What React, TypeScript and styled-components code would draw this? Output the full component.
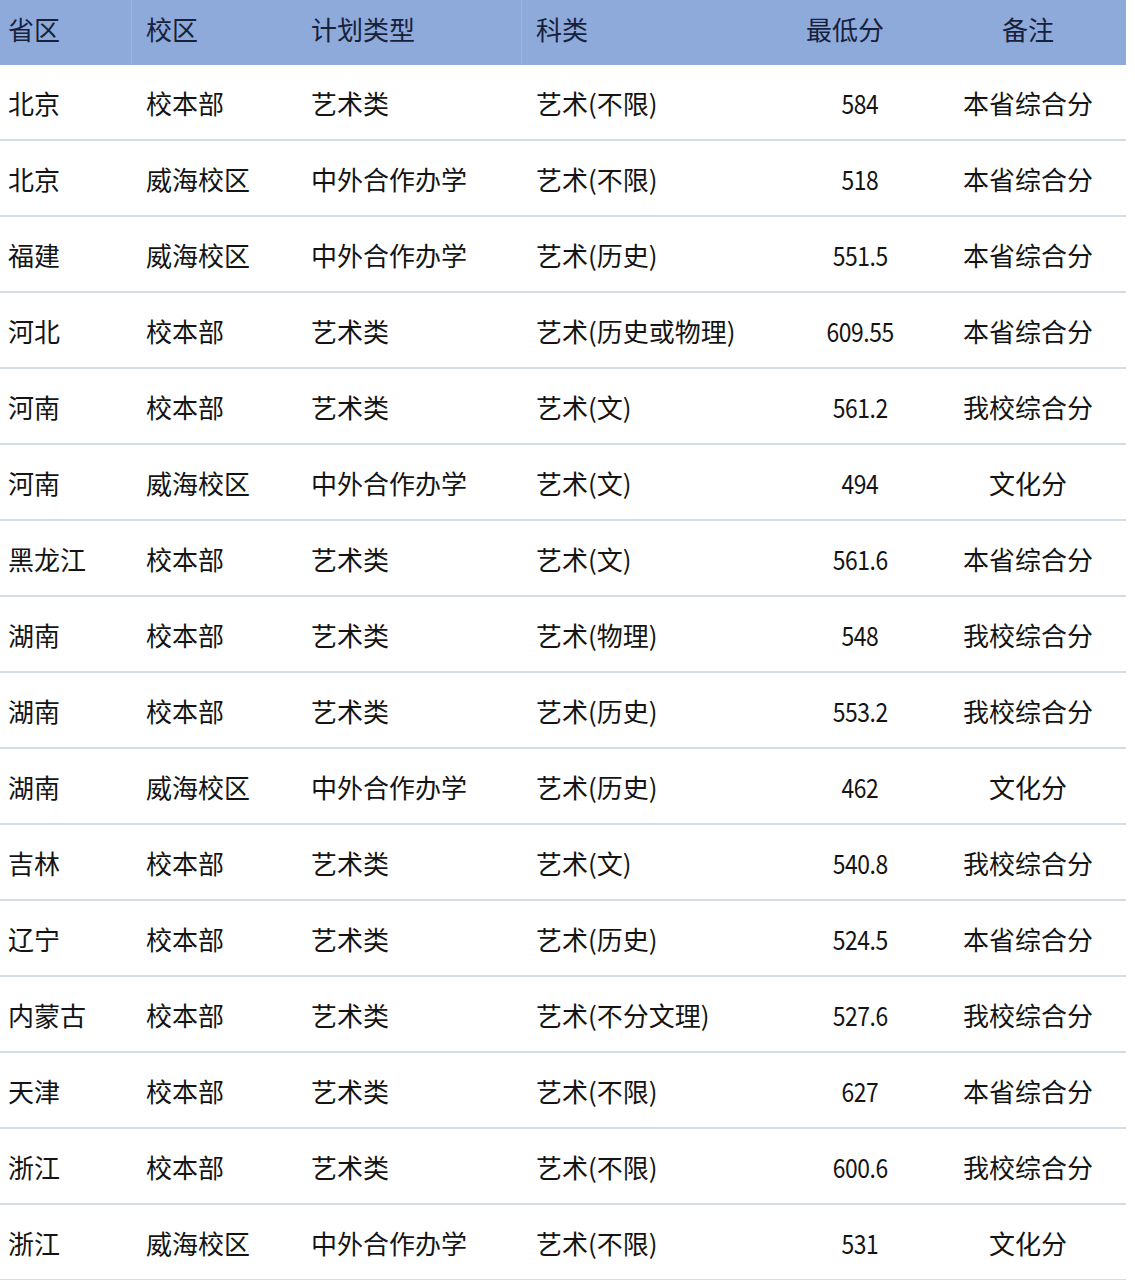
import styled, { createGlobalStyle } from "styled-components";

const GlobalStyle = createGlobalStyle`
  body {
    margin: 0;
    background: #ffffff;
    font-family: "Noto Sans CJK SC", "Noto Sans", sans-serif;
  }
`;

const columns = "132px 165px 225px 238px 200px 166px";

const Table = styled.div`
  width: 1126px;
`;

const HeaderRow = styled.div`
  display: grid;
  grid-template-columns: ${columns};
  height: 65px;
  background: #8eaadb;
`;

const HeaderCell = styled.div<{ $center?: boolean; $divider?: boolean }>`
  display: flex;
  align-items: center;
  justify-content: ${(p) => (p.$center ? "center" : "flex-start")};
  padding: ${(p) => (p.$center ? "0 30px 8px 0" : "0 0 8px 14px")};
  font-size: 26px;
  color: #18213a;
  border-right: ${(p) => (p.$divider ? "1px solid #9bb4e0" : "none")};
  &:first-child {
    padding-left: 8px;
  }
`;

const Row = styled.div`
  display: grid;
  grid-template-columns: ${columns};
  height: 76px;
  border-bottom: 2px solid #d6dce4;
  box-sizing: border-box;
`;

const Cell = styled.div<{ $center?: boolean; $padRight?: number }>`
  display: flex;
  align-items: center;
  justify-content: ${(p) => (p.$center ? "center" : "flex-start")};
  padding: ${(p) => (p.$center ? `0 ${p.$padRight ?? 0}px 0 0` : "0 0 0 14px")};
  font-size: 26px;
  color: #141414;
  white-space: nowrap;
  &:first-child {
    padding-left: 8px;
  }
`;

const Score = styled.span`
  display: inline-block;
  transform: scaleX(0.88);
  letter-spacing: -0.5px;
`;

type Item = {
  province: string;
  campus: string;
  plan: string;
  subject: string;
  score: string;
  note: string;
};

const rows: Item[] = [
  { province: "北京", campus: "校本部", plan: "艺术类", subject: "艺术(不限)", score: "584", note: "本省综合分" },
  { province: "北京", campus: "威海校区", plan: "中外合作办学", subject: "艺术(不限)", score: "518", note: "本省综合分" },
  { province: "福建", campus: "威海校区", plan: "中外合作办学", subject: "艺术(历史)", score: "551.5", note: "本省综合分" },
  { province: "河北", campus: "校本部", plan: "艺术类", subject: "艺术(历史或物理)", score: "609.55", note: "本省综合分" },
  { province: "河南", campus: "校本部", plan: "艺术类", subject: "艺术(文)", score: "561.2", note: "我校综合分" },
  { province: "河南", campus: "威海校区", plan: "中外合作办学", subject: "艺术(文)", score: "494", note: "文化分" },
  { province: "黑龙江", campus: "校本部", plan: "艺术类", subject: "艺术(文)", score: "561.6", note: "本省综合分" },
  { province: "湖南", campus: "校本部", plan: "艺术类", subject: "艺术(物理)", score: "548", note: "我校综合分" },
  { province: "湖南", campus: "校本部", plan: "艺术类", subject: "艺术(历史)", score: "553.2", note: "我校综合分" },
  { province: "湖南", campus: "威海校区", plan: "中外合作办学", subject: "艺术(历史)", score: "462", note: "文化分" },
  { province: "吉林", campus: "校本部", plan: "艺术类", subject: "艺术(文)", score: "540.8", note: "我校综合分" },
  { province: "辽宁", campus: "校本部", plan: "艺术类", subject: "艺术(历史)", score: "524.5", note: "本省综合分" },
  { province: "内蒙古", campus: "校本部", plan: "艺术类", subject: "艺术(不分文理)", score: "527.6", note: "我校综合分" },
  { province: "天津", campus: "校本部", plan: "艺术类", subject: "艺术(不限)", score: "627", note: "本省综合分" },
  { province: "浙江", campus: "校本部", plan: "艺术类", subject: "艺术(不限)", score: "600.6", note: "我校综合分" },
  { province: "浙江", campus: "威海校区", plan: "中外合作办学", subject: "艺术(不限)", score: "531", note: "文化分" },
];

export default function App() {
  return (
    <>
      <GlobalStyle />
      <Table>
        <HeaderRow>
          <HeaderCell $divider>省区</HeaderCell>
          <HeaderCell>校区</HeaderCell>
          <HeaderCell $divider>计划类型</HeaderCell>
          <HeaderCell>科类</HeaderCell>
          <HeaderCell $center>最低分</HeaderCell>
          <HeaderCell $center>备注</HeaderCell>
        </HeaderRow>
        {rows.map((r, i) => (
          <Row key={i}>
            <Cell>{r.province}</Cell>
            <Cell>{r.campus}</Cell>
            <Cell>{r.plan}</Cell>
            <Cell>{r.subject}</Cell>
            <Cell $center>
              <Score>{r.score}</Score>
            </Cell>
            <Cell $center $padRight={30}>
              {r.note}
            </Cell>
          </Row>
        ))}
      </Table>
    </>
  );
}
